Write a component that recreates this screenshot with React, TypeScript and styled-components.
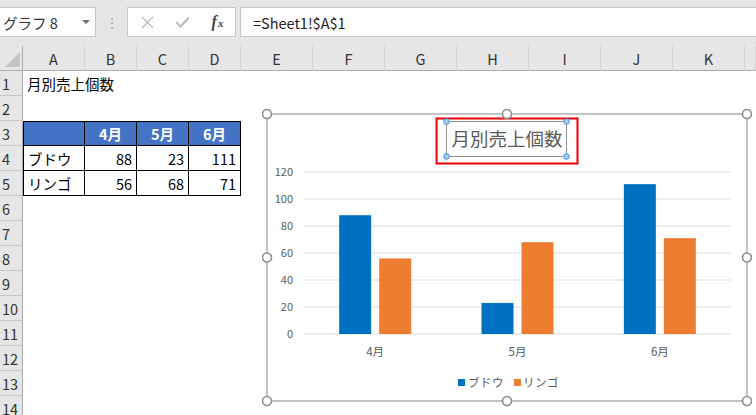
import React from "react";
import styled, { createGlobalStyle } from "styled-components";

const GlobalStyle = createGlobalStyle`
    html, body {
        margin: 0;
        padding: 0;
        background: #ffffff;
        overflow: hidden;
    }
    body {
        font-family: "Noto Sans CJK JP", "Noto Sans", sans-serif;
        color: #000;
    }
`;

const FONT = `"Noto Sans CJK JP", "Noto Sans", sans-serif`;

const Page = styled.div`
    position: relative;
    width: 756px;
    height: 415px;
    overflow: hidden;
    background: #fff;
`;

/* ---------- formula bar ---------- */

const Toolbar = styled.div`
    display: flex;
    align-items: flex-start;
    height: 46px;
    padding-top: 7px;
    box-sizing: border-box;
    background: #e6e6e6;
`;

const NameBox = styled.div`
    width: 96px;
    height: 30px;
    box-sizing: border-box;
    display: flex;
    align-items: center;
    justify-content: space-between;
    padding: 0 5px 0 3px;
    background: #fdfdfd;
    border: 1px solid #c6c6c6;
    border-left: none;
    font-size: 14.5px;
    color: #333;
`;

const Caret = styled.span`
    width: 0;
    height: 0;
    border-left: 4px solid transparent;
    border-right: 4px solid transparent;
    border-top: 4px solid #707070;
`;

const Grip = styled.div`
    width: 31px;
    height: 30px;
    display: flex;
    align-items: center;
    justify-content: center;
    color: #a8a8a8;
    font-size: 14px;
`;

const ButtonGroup = styled.div`
    width: 109px;
    height: 30px;
    box-sizing: border-box;
    display: flex;
    align-items: center;
    padding-left: 2px;
    background: #fdfdfd;
    border: 1px solid #c6c6c6;
`;

const BarButton = styled.span`
    width: 36px;
    display: flex;
    align-items: center;
    justify-content: center;
`;

const Fx = styled.span`
    font-family: "Liberation Serif", serif;
    font-style: italic;
    font-weight: 700;
    font-size: 16px;
    color: #444;
    sub {
        font-size: 11px;
        vertical-align: baseline;
        margin-left: 1px;
    }
`;

const FormulaBox = styled.div`
    flex: 1;
    height: 30px;
    margin-left: 4px;
    box-sizing: border-box;
    display: flex;
    align-items: center;
    padding-left: 12px;
    background: #fdfdfd;
    border: 1px solid #c6c6c6;
    border-right: none;
    font-size: 14.5px;
    color: #222;
`;

/* ---------- sheet grid ---------- */

const Sheet = styled.div`
    display: grid;
    grid-template-columns: 23px 62px 52px 52px 52px repeat(7, 72px) 1fr;
    grid-auto-rows: 25px;
    font-size: 14.5px;
`;

const Corner = styled.div`
    position: relative;
    background: #e6e6e6;
    border-right: 1px solid #ababab;
    border-bottom: 1px solid #ababab;
    &::after {
        content: "";
        position: absolute;
        right: 2px;
        bottom: 3px;
        width: 0;
        height: 0;
        border-left: 15px solid transparent;
        border-bottom: 15px solid #c4c4c4;
    }
`;

const ColHead = styled.div`
    display: flex;
    align-items: center;
    justify-content: center;
    background: #e6e6e6;
    border-right: 1px solid #d2d2d2;
    border-bottom: 1px solid #ababab;
    color: #333;
    white-space: nowrap;
    overflow: hidden;
`;

const RowHead = styled.div`
    display: flex;
    align-items: center;
    padding-left: 2px;
    background: #e6e6e6;
    border-right: 1px solid #ababab;
    border-bottom: 1px solid #c8c8c8;
    color: #333;
    overflow: hidden;
`;

const Cell = styled.div<{
    $align?: "left" | "right" | "center";
    $head?: boolean;
    $boxed?: boolean;
    $first?: boolean;
    $top?: boolean;
}>`
    display: flex;
    align-items: center;
    justify-content: ${(p) =>
        p.$align === "right" ? "flex-end" : p.$align === "center" ? "center" : "flex-start"};
    padding: 0 4px;
    white-space: nowrap;
    overflow: visible;
    min-width: 0;
    box-sizing: border-box;
    background: ${(p) => (p.$head ? "#4472c4" : "transparent")};
    color: ${(p) => (p.$head ? "#fff" : "#000")};
    font-weight: ${(p) => (p.$head ? 700 : 400)};
    border-right: ${(p) => (p.$boxed ? "1px solid #000" : "none")};
    border-bottom: ${(p) => (p.$boxed ? "1px solid #000" : "none")};
    border-left: ${(p) => (p.$first ? "1px solid #000" : "none")};
    border-top: ${(p) => (p.$top ? "1px solid #000" : "none")};
`;

/* ---------- chart object ---------- */

const ChartObject = styled.div`
    position: absolute;
    left: 262px;
    top: 109px;
    width: 490px;
    height: 298px;
`;

const COLS = ["A", "B", "C", "D", "E", "F", "G", "H", "I", "J", "K", ""];

type CellData = { text?: string | number; align?: "left" | "right" | "center"; head?: boolean; boxed?: boolean };

const table: Record<number, CellData[]> = {
    1: [{ text: "月別売上個数" }],
    3: [
        { text: "", head: true, boxed: true },
        { text: "4月", head: true, boxed: true, align: "center" },
        { text: "5月", head: true, boxed: true, align: "center" },
        { text: "6月", head: true, boxed: true, align: "center" },
    ],
    4: [
        { text: "ブドウ", boxed: true },
        { text: 88, boxed: true, align: "right" },
        { text: 23, boxed: true, align: "right" },
        { text: 111, boxed: true, align: "right" },
    ],
    5: [
        { text: "リンゴ", boxed: true },
        { text: 56, boxed: true, align: "right" },
        { text: 68, boxed: true, align: "right" },
        { text: 71, boxed: true, align: "right" },
    ],
};

const series = [
    { name: "ブドウ", color: "#0070c0", values: [88, 23, 111] },
    { name: "リンゴ", color: "#ed7d31", values: [56, 68, 71] },
];
const months = ["4月", "5月", "6月"];

const PLOT_LEFT = 37;
const PLOT_RIGHT = 464;
const ZERO_Y = 220;
const SCALE = 1.35;
const GRAY = "#595959";

const Chart = () => {
    const catW = (PLOT_RIGHT - PLOT_LEFT) / 3;
    const handle = (x: number, y: number, k: string) => (
        <circle key={k} cx={x} cy={y} r={4.5} fill="#fff" stroke="#8c8c8c" strokeWidth={1.6} />
    );
    const blue = (x: number, y: number, k: string) => (
        <circle key={k} cx={x} cy={y} r={2.8} fill="#a8cff5" stroke="#3d8fdc" strokeWidth={1} />
    );
    return (
        <svg width="490" height="298" viewBox="0 0 490 298" fontFamily={FONT}>
            <g transform="translate(5,5)">
                <rect x={0} y={0} width={480} height={287} fill="#fff" stroke="#9c9c9c" strokeWidth={1.2} />

                {/* gridlines + value axis */}
                {[0, 20, 40, 60, 80, 100, 120].map((v) => {
                    const y = ZERO_Y - v * SCALE;
                    return (
                        <g key={v}>
                            <line x1={PLOT_LEFT} x2={PLOT_RIGHT} y1={y} y2={y} stroke="#d9d9d9" strokeWidth={1} />
                            <text x={26} y={y + 4} fontSize={11} fill={GRAY} textAnchor="end">
                                {v}
                            </text>
                        </g>
                    );
                })}

                {/* bars */}
                {months.map((m, i) => {
                    const c = PLOT_LEFT + (i + 0.5) * catW;
                    return (
                        <g key={m}>
                            {series.map((s, j) => {
                                const h = s.values[i] * SCALE;
                                const x = j === 0 ? c - 36 : c + 4;
                                return <rect key={s.name} x={x} y={ZERO_Y - h} width={32} height={h} fill={s.color} />;
                            })}
                            <text x={c} y={242} fontSize={11.5} fill={GRAY} textAnchor="middle">
                                {m}
                            </text>
                        </g>
                    );
                })}

                {/* legend */}
                <rect x={191} y={265} width={7} height={7} fill="#0070c0" />
                <text x={201} y={272.5} fontSize={11.5} fill={GRAY} letterSpacing={0.5}>
                    ブドウ
                </text>
                <rect x={247} y={265} width={7} height={7} fill="#ed7d31" />
                <text x={256} y={272.5} fontSize={11.5} fill={GRAY} letterSpacing={0.5}>
                    リンゴ
                </text>

                {/* title, selected */}
                <rect x={169.5} y={4.5} width={141} height={45} fill="none" stroke="#ee0000" strokeWidth={2} />
                <rect x={179.5} y={7.5} width={120} height={35} fill="none" stroke="#8c8c8c" strokeWidth={1} />
                <text x={240} y={32} fontSize={18.5} fill={GRAY} textAnchor="middle">
                    月別売上個数
                </text>
                {blue(179.5, 7.5, "b1")}
                {blue(299.5, 7.5, "b2")}
                {blue(179.5, 42.5, "b3")}
                {blue(299.5, 42.5, "b4")}

                {/* chart handles */}
                {handle(0, 0, "h1")}
                {handle(240, 0, "h2")}
                {handle(480, 0, "h3")}
                {handle(0, 143.5, "h4")}
                {handle(480, 143.5, "h5")}
                {handle(0, 287, "h6")}
                {handle(240, 287, "h7")}
                {handle(480, 287, "h8")}
            </g>
        </svg>
    );
};

const App = () => {
    const rows = Array.from({ length: 14 }, (_, i) => i + 1);
    return (
        <Page>
            <GlobalStyle />
            <Toolbar>
                <NameBox>
                    <span>グラフ 8</span>
                    <Caret />
                </NameBox>
                <Grip>⋮</Grip>
                <ButtonGroup>
                    <BarButton>
                        <svg width="13" height="13" viewBox="0 0 13 13">
                            <path d="M1 1 L12 12 M12 1 L1 12" stroke="#bdbdbd" strokeWidth="1.4" fill="none" />
                        </svg>
                    </BarButton>
                    <BarButton>
                        <svg width="15" height="12" viewBox="0 0 15 12">
                            <path d="M1 6 L5.5 10.5 L14 1.5" stroke="#bdbdbd" strokeWidth="2" fill="none" />
                        </svg>
                    </BarButton>
                    <BarButton>
                        <Fx>
                            f<sub>x</sub>
                        </Fx>
                    </BarButton>
                </ButtonGroup>
                <FormulaBox>=Sheet1!$A$1</FormulaBox>
            </Toolbar>

            <Sheet>
                <Corner />
                {COLS.map((c, i) => (
                    <ColHead key={`c${i}`}>{c}</ColHead>
                ))}
                {rows.map((r) => (
                    <React.Fragment key={r}>
                        <RowHead>{r}</RowHead>
                        {COLS.map((_, ci) => {
                            const d = table[r]?.[ci];
                            return (
                                <Cell
                                    key={ci}
                                    $align={d?.align}
                                    $head={d?.head}
                                    $boxed={d?.boxed}
                                    $first={d?.boxed && ci === 0}
                                    $top={r === 3 && d?.boxed}
                                >
                                    {d?.text}
                                </Cell>
                            );
                        })}
                    </React.Fragment>
                ))}
            </Sheet>

            <ChartObject>
                <Chart />
            </ChartObject>
        </Page>
    );
};

export default App;
